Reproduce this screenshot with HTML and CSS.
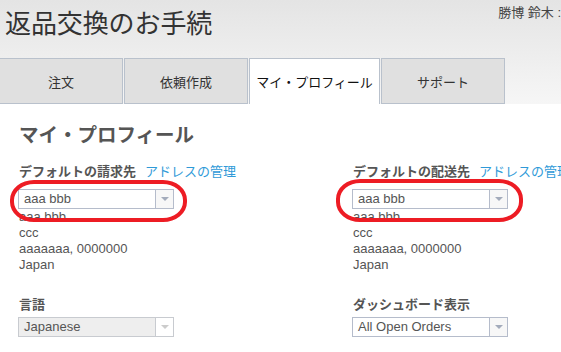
FILE: index.html
```html
<!DOCTYPE html>
<html lang="ja">
<head>
<meta charset="utf-8">
<title>返品交換のお手続</title>
<link rel="stylesheet" href="styles.css">
</head>
<body>
<header class="header">
  <div class="header-top">
    <h1 class="title">返品交換のお手続</h1>
    <div class="user">勝博 鈴木 :</div>
  </div>
  <nav class="tabs">
    <a class="tab tab-1">注文</a>
    <a class="tab tab-2">依頼作成</a>
    <a class="tab tab-3 active">マイ・プロフィール</a>
    <a class="tab tab-4">サポート</a>
  </nav>
</header>
<main class="content">
  <h2 class="heading">マイ・プロフィール</h2>
  <div class="columns">
    <section class="col col-left">
      <div class="label">デフォルトの請求先<a class="link">アドレスの管理</a></div>
      <div class="select-wrap">
        <div class="select"><span class="select-text">aaa bbb</span><span class="arrow"></span></div>
        <div class="ring ring-a"></div>
      </div>
      <div class="address">
        <div>aaa bbb</div>
        <div>ccc</div>
        <div>aaaaaaa, 0000000</div>
        <div>Japan</div>
      </div>
      <div class="label label-lower">言語</div>
      <div class="select select-lower disabled"><span class="select-text">Japanese</span><span class="arrow"></span></div>
    </section>
    <section class="col col-right">
      <div class="label">デフォルトの配送先<a class="link">アドレスの管理</a></div>
      <div class="select-wrap">
        <div class="select"><span class="select-text">aaa bbb</span><span class="arrow"></span></div>
        <div class="ring ring-b"></div>
      </div>
      <div class="address">
        <div>aaa bbb</div>
        <div>ccc</div>
        <div>aaaaaaa, 0000000</div>
        <div>Japan</div>
      </div>
      <div class="label label-lower">ダッシュボード表示</div>
      <div class="select select-lower"><span class="select-text">All Open Orders</span><span class="arrow"></span></div>
    </section>
  </div>
</main>
</body>
</html>
```
FILE: styles.css
```css
html, body {
  margin: 0;
  padding: 0;
  background: #ffffff;
}
body {
  font-family: "Liberation Sans", "Noto Sans CJK JP", sans-serif;
  color: #555555;
  width: 561px;
  overflow: hidden;
}
.header {
  height: 104px;
  background: linear-gradient(to bottom, #e4e4e4 0%, #f6f6f6 100%);
  display: flex;
  flex-direction: column;
  overflow: hidden;
}
.header-top {
  height: 58px;
  display: flex;
  justify-content: space-between;
  align-items: flex-start;
}
.title {
  margin: 8px 0 0 5px;
  font-size: 26px;
  line-height: 32px;
  font-weight: normal;
  color: #333333;
  letter-spacing: -0.1px;
}
.user {
  margin-top: 5px;
  font-size: 13px;
  line-height: 16px;
  color: #444444;
  white-space: nowrap;
}
.tabs {
  display: flex;
  gap: 1px;
  margin-left: -1px;
  height: 46px;
}
.tab {
  box-sizing: border-box;
  height: 46px;
  display: flex;
  align-items: center;
  justify-content: center;
  background: #e0e0e0;
  border: 1px solid #b9c1cc;
  font-size: 13px;
  color: #333333;
}
.tab-1 { width: 124px; }
.tab-2 { width: 124px; }
.tab-3 { width: 131px; }
.tab-4 { width: 124px; }
.tab.active {
  background: #ffffff;
  border-bottom: none;
  height: 46px;
  color: #111111;
}
.content {
  padding: 0 0 0 19px;
}
.heading {
  margin: 19px 0 0 0;
  font-size: 19.5px;
  line-height: 24px;
  font-weight: bold;
  color: #555555;
}
.columns {
  display: flex;
  margin-top: 17px;
}
.col-left {
  flex: 0 0 334px;
  width: 334px;
}
.col-right {
  flex: 1 1 0;
  min-width: 0;
}
.label {
  font-size: 13px;
  line-height: 16px;
  font-weight: bold;
  color: #555555;
  white-space: nowrap;
}
.link {
  font-weight: normal;
  color: #2f9ad8;
  margin-left: 9px;
}
.select-wrap {
  position: relative;
  width: 156px;
  margin-top: 9px;
  margin-left: -1px;
}
.select {
  box-sizing: border-box;
  width: 156px;
  height: 20px;
  border: 1px solid #b5bccb;
  background: #ffffff;
  display: flex;
  align-items: center;
  font-size: 13px;
  color: #555555;
}
.select-text {
  flex: 1;
  padding-left: 5px;
  line-height: 18px;
}
.arrow {
  width: 17px;
  height: 18px;
  border-left: 1px solid #b5bccb;
  background: #f7f7f7;
  display: flex;
  align-items: center;
  justify-content: center;
}
.arrow::after {
  content: "";
  border-left: 4px solid transparent;
  border-right: 4px solid transparent;
  border-top: 4px solid #a3abbb;
}
.ring {
  position: absolute;
  border: 4px solid #ed1c24;
  border-radius: 24px / 20px;
  pointer-events: none;
  z-index: 2;
}
.ring-a {
  left: -8px;
  right: -13px;
  top: -9px;
  bottom: -13px;
}
.ring-b {
  left: -16px;
  right: -15px;
  top: -10px;
  bottom: -13px;
}
.address {
  font-size: 13px;
  line-height: 16px;
  color: #555555;
}
.label-lower {
  margin-top: 24px;
}
.select-lower {
  margin-top: 4px;
  margin-left: -1px;
}
.select.disabled {
  background: #eeeeee;
  border-color: #c8cbd0;
}
.select.disabled .arrow {
  background: #ffffff;
  border-left-color: #c8cbd0;
}
.select.disabled .arrow::after {
  border-top-color: #cccccc;
}
```
